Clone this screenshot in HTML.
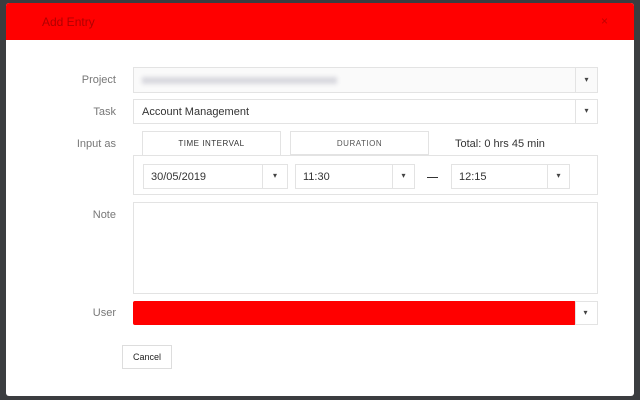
<!DOCTYPE html>
<html><head><style>
*{box-sizing:border-box;margin:0;padding:0}
body{width:640px;height:400px;background:#3b3d40;position:relative;overflow:hidden;font-family:"Liberation Sans",sans-serif;color:#333}
.modal{position:absolute;left:6px;top:3px;width:628px;height:393px;background:#fff;border-radius:3px;overflow:hidden}
.hdr{position:absolute;left:0;top:0;width:628px;height:37px;background:#ff0000}
.hdr .t{position:absolute;left:36px;top:12px;font-size:12px;color:#b00000}
.hdr .x{position:absolute;right:26px;top:11px;font-size:12px;color:#c00000}
.abs{position:absolute}
.lbl{position:absolute;font-size:11px;color:#777;text-align:right;width:60px}
.box{position:absolute;border:1px solid #e3e3e3;background:#fff;font-size:11px}
.car{position:absolute;top:0;bottom:0;right:0;width:22px;border-left:1px solid #e3e3e3;text-align:center;font-size:8px;line-height:22px;color:#444}
</style></head><body>
<div class="modal">
<div class="hdr"><span class="t">Add Entry</span><span class="x">×</span></div>
</div>
<div class="lbl" style="left:56px;top:74px">Project</div>
<div class="box" style="left:133px;top:67px;width:465px;height:26px;background:#fafafa"><div class="abs" style="left:8px;top:9px;width:195px;height:7px;background:#d8d8de;filter:blur(2px)"></div><div class="car" style="line-height:24px">▾</div></div>
<div class="lbl" style="left:56px;top:106px">Task</div>
<div class="box" style="left:133px;top:99px;width:465px;height:25px"><span class="abs" style="left:8px;top:6px;color:#333">Account Management</span><div class="car">▾</div></div>
<div class="lbl" style="left:56px;top:138px">Input as</div>
<div class="box" style="left:142px;top:131px;width:139px;height:25px;border-bottom:none;text-align:center;font-size:8px;line-height:24px;letter-spacing:.5px">TIME INTERVAL</div>
<div class="box" style="left:290px;top:131px;width:139px;height:24px;text-align:center;font-size:8px;line-height:23px;letter-spacing:.5px;color:#555">DURATION</div>
<div class="abs" style="left:455px;top:138px;font-size:11px">Total: 0 hrs 45 min</div>
<div class="box" style="left:133px;top:155px;width:465px;height:40px"></div>
<div class="box" style="left:143px;top:164px;width:145px;height:25px"><span class="abs" style="left:7px;top:6px">30/05/2019</span><div class="car" style="width:25px">▾</div></div>
<div class="box" style="left:295px;top:164px;width:120px;height:25px"><span class="abs" style="left:7px;top:6px">11:30</span><div class="car">▾</div></div>
<div class="abs" style="left:427px;top:177px;width:11px;height:1px;background:#333"></div>
<div class="box" style="left:451px;top:164px;width:119px;height:25px"><span class="abs" style="left:7px;top:6px">12:15</span><div class="car">▾</div></div>
<div class="lbl" style="left:56px;top:209px">Note</div>
<div class="box" style="left:133px;top:202px;width:465px;height:92px"></div>
<div class="lbl" style="left:56px;top:307px">User</div>
<div class="abs" style="left:133px;top:301px;width:443px;height:24px;background:#ff0000;border-radius:2px"></div>
<div class="box" style="left:575px;top:301px;width:23px;height:24px"><div class="car" style="width:23px;border:none;line-height:22px">▾</div></div>
<div class="box" style="left:122px;top:345px;width:50px;height:24px;border-color:#ddd;text-align:center;font-size:9px;line-height:22px;color:#222">Cancel</div>
</body></html>
